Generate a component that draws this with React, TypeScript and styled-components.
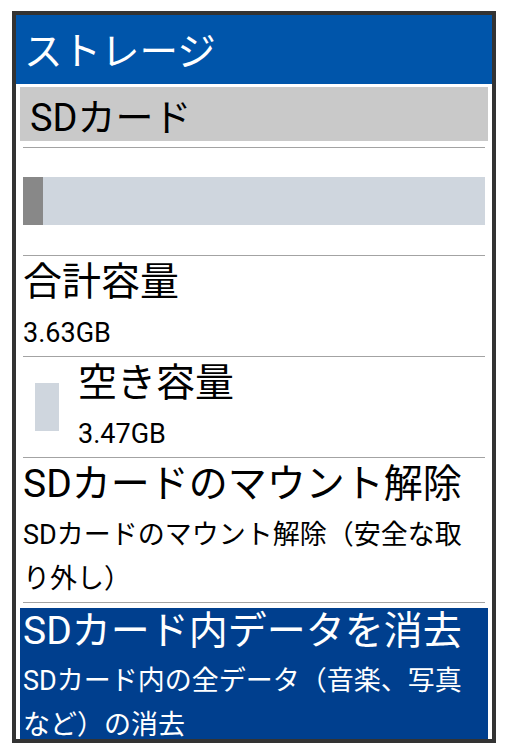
import React from "react";
import styled, { createGlobalStyle } from "styled-components";

const GlobalStyle = createGlobalStyle`
  html, body {
    margin: 0;
    padding: 0;
    background: #ffffff;
  }
  body {
    font-family: Roboto, "Noto Sans CJK JP", sans-serif;
  }
`;

const TOTAL_GB = 3.63;
const FREE_GB = 3.47;

type Entry = {
  title: string;
  summary: string;
  swatch?: boolean;
  selected?: boolean;
};

const entries: Entry[] = [
  { title: "合計容量", summary: "3.63GB" },
  { title: "空き容量", summary: "3.47GB", swatch: true },
  {
    title: "SDカードのマウント解除",
    summary: "SDカードのマウント解除（安全な取り外し）",
  },
  {
    title: "SDカード内データを消去",
    summary: "SDカード内の全データ（音楽、写真など）の消去",
    selected: true,
  },
];

export default function App() {
  const usedPercent = ((TOTAL_GB - FREE_GB) / TOTAL_GB) * 100;

  return (
    <Page>
      <GlobalStyle />
      <Frame>
        <TitleBar>ストレージ</TitleBar>
        <List>
          <Category>SDカード</Category>
          <Divider />
          <MeterRow>
            <Meter>
              <MeterUsed style={{ width: `${usedPercent}%` }} />
            </Meter>
          </MeterRow>
          {entries.map((entry) => (
            <React.Fragment key={entry.title}>
              <Divider />
              <Item $selected={entry.selected}>
                {entry.swatch && <Swatch />}
                <ItemText>
                  <ItemTitle $selected={entry.selected}>{entry.title}</ItemTitle>
                  <ItemSummary $selected={entry.selected}>
                    {entry.summary}
                  </ItemSummary>
                </ItemText>
              </Item>
            </React.Fragment>
          ))}
        </List>
      </Frame>
    </Page>
  );
}

const Page = styled.div`
  padding: 11px 0 0 12px;
`;

const Frame = styled.div`
  width: 476px;
  height: 724px;
  border: 4px solid #333333;
  overflow: hidden;
  background: #ffffff;
`;

const TitleBar = styled.header`
  height: 69px;
  display: flex;
  align-items: center;
  padding: 0 0 3px 8px;
  box-sizing: border-box;
  background: #0055aa;
  color: #ffffff;
  font-size: 38.5px;
`;

const List = styled.div`
  display: flex;
  flex-direction: column;
  padding: 0 4px;
`;

const Category = styled.div`
  height: 54px;
  margin: 3px 0 6px;
  padding-left: 10px;
  display: flex;
  align-items: center;
  background: #c9c9c9;
  color: #000000;
  font-size: 38px;
`;

const Divider = styled.div`
  height: 1px;
  margin: 0 3px;
  background: #a3a3a3;
`;

const MeterRow = styled.div`
  padding: 29px 3px 30px;
`;

const Meter = styled.div`
  height: 48px;
  background: #cfd6de;
  display: flex;
`;

const MeterUsed = styled.div`
  background: #888888;
`;

const Item = styled.div<{ $selected?: boolean }>`
  display: flex;
  align-items: center;
  padding: ${(p) => (p.$selected ? "0 3px" : "0 3px 1px")};
  margin-top: ${(p) => (p.$selected ? "5px" : "0")};
  background: ${(p) => (p.$selected ? "#003f8e" : "transparent")};
`;

const Swatch = styled.div`
  flex: none;
  width: 24px;
  height: 48px;
  margin: 0 19px 0 12px;
  background: #cfd6de;
`;

const ItemText = styled.div`
  flex: 1;
  min-width: 0;
`;

const ItemTitle = styled.div<{ $selected?: boolean }>`
  font-size: 39px;
  line-height: ${(p) => (p.$selected ? "46px" : "52px")};
  color: ${(p) => (p.$selected ? "#ffffff" : "#000000")};
  white-space: nowrap;
`;

const ItemSummary = styled.div<{ $selected?: boolean }>`
  font-size: 27px;
  line-height: 44px;
  margin-top: ${(p) => (p.$selected ? "5px" : "3px")};
  color: ${(p) => (p.$selected ? "#ffffff" : "#000000")};
`;
